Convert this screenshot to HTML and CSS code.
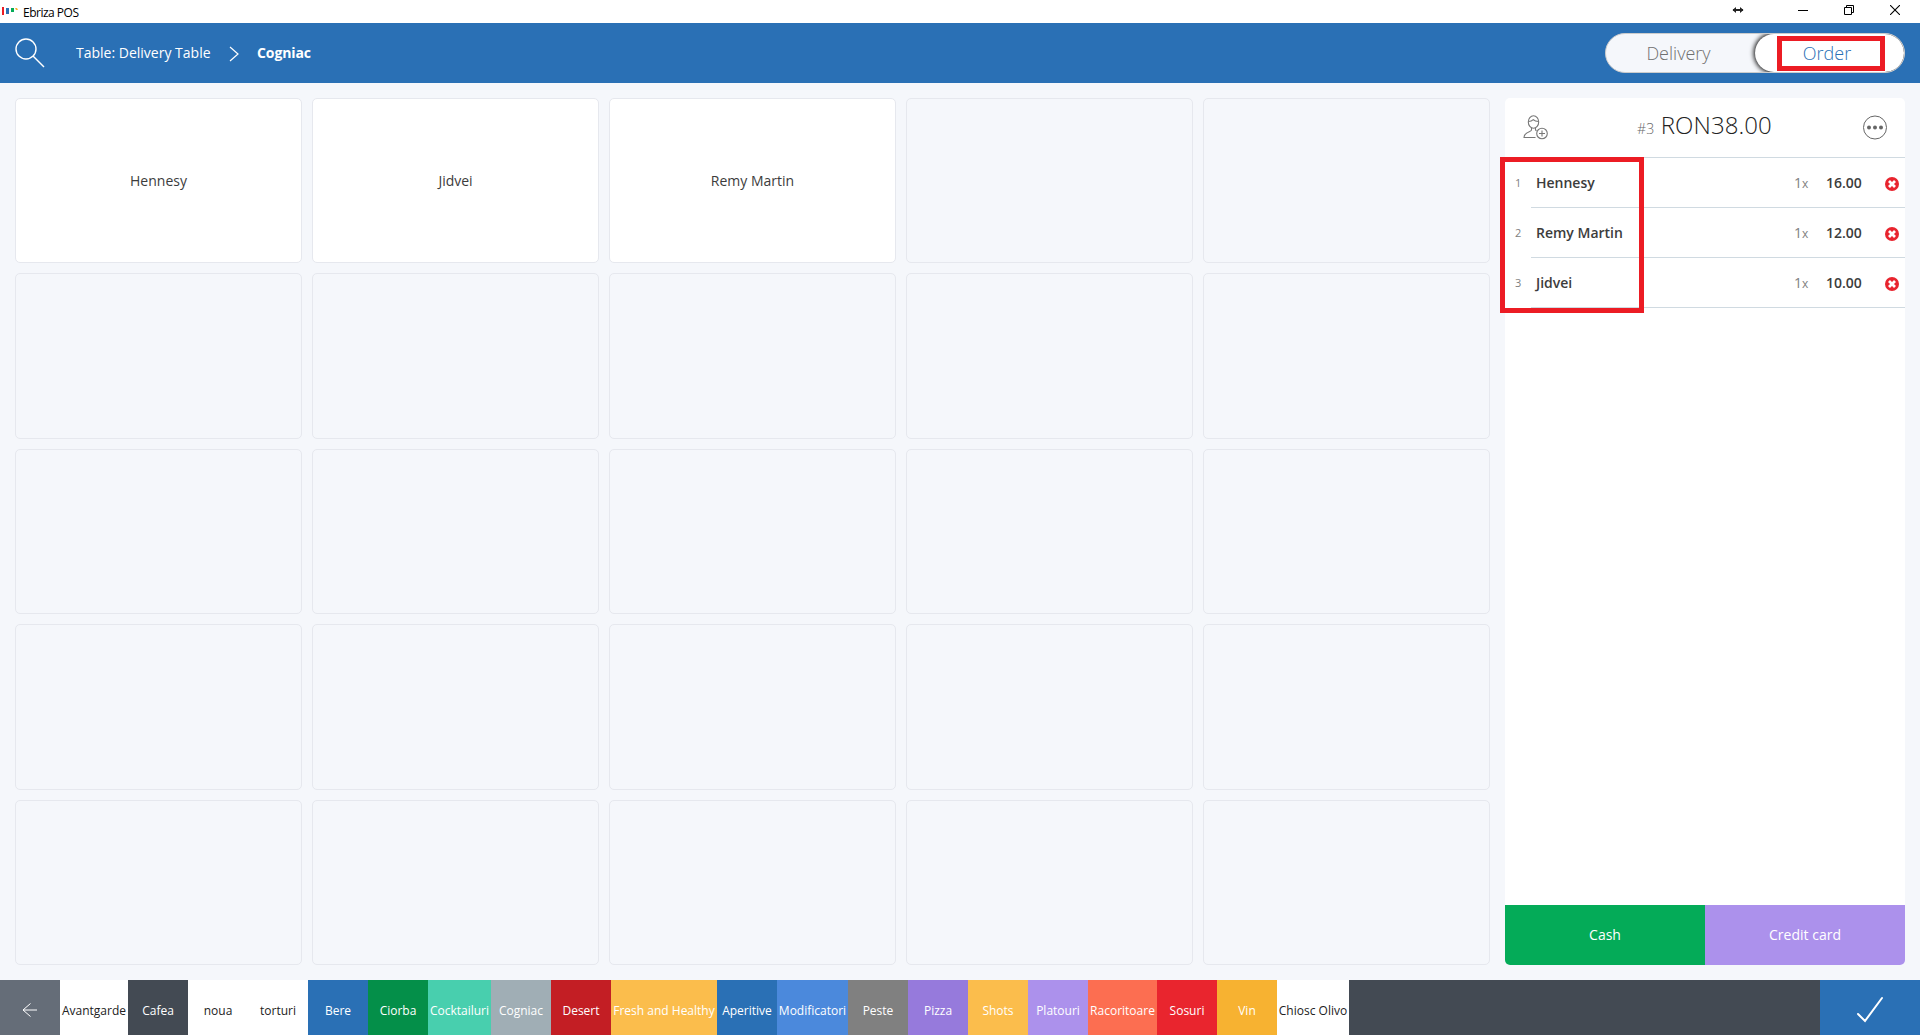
FILE: index.html
```
<!DOCTYPE html>
<html lang="en">
<head>
    <meta charset="UTF-8">
    <meta name="viewport" content="width=device-width, initial-scale=1.0">
    <title>Ebriza POS</title>
    <link rel="stylesheet" href="styles.css">
</head>
<body>
    <div class="titlebar">
      <svg class="logo" width="17" height="10" viewBox="0 0 17 10">
        <rect x="0" y="1" width="2" height="8" fill="#ec1c24"/>
        <rect x="4" y="2" width="3" height="6" fill="#2a70b5"/>
        <rect x="9" y="2" width="3" height="4" fill="#04ab58"/>
        <path d="M13 2h2l1 2h-2z" fill="#f7b231"/>
      </svg>
      <span class="app-name">Ebriza POS</span>
      <div class="window-buttons">
        <svg width="12" height="8" viewBox="0 0 12 8"><path d="M1 4h10" stroke="#222" stroke-width="2"/><path d="M0.5 4l3.5-3v6zM11.5 4l-3.5-3v6z" fill="#222"/></svg>
        <svg width="10" height="10" viewBox="0 0 10 10"><path d="M0 5.5h10" stroke="#000"/></svg>
        <svg width="10" height="10" viewBox="0 0 10 10"><path d="M0.5 2.5h7v7h-7zM2.5 2.5v-2h7v7h-2" stroke="#000" fill="none"/></svg>
        <svg width="10" height="10" viewBox="0 0 10 10"><path d="M0 0l10 10M10 0l-10 10" stroke="#000" stroke-width="1.1"/></svg>
      </div>
    </div>

    <div class="header">
      <svg class="search" width="30" height="30" viewBox="0 0 30 30"><circle cx="11" cy="11" r="10" /><path d="M18 18l11 11"/></svg>
      <span class="crumb">Table: Delivery Table</span>
      <svg class="chevron" width="10" height="16" viewBox="0 0 10 16"><path d="M1 1l8 7-8 7"/></svg>
      <span class="crumb current">Cogniac</span>
      <div class="switch">
        <div class="switch-item">Delivery</div>
        <div class="switch-item active">Order<div class="mark mark-order"></div></div>
      </div>
    </div>

    <div class="main">
      <div class="products">
        <div class="product">Hennesy</div>
        <div class="product">Jidvei</div>
        <div class="product">Remy Martin</div>
        <div class="product empty"></div>
        <div class="product empty"></div>
        <div class="product empty"></div>
        <div class="product empty"></div>
        <div class="product empty"></div>
        <div class="product empty"></div>
        <div class="product empty"></div>
        <div class="product empty"></div>
        <div class="product empty"></div>
        <div class="product empty"></div>
        <div class="product empty"></div>
        <div class="product empty"></div>
        <div class="product empty"></div>
        <div class="product empty"></div>
        <div class="product empty"></div>
        <div class="product empty"></div>
        <div class="product empty"></div>
        <div class="product empty"></div>
        <div class="product empty"></div>
        <div class="product empty"></div>
        <div class="product empty"></div>
        <div class="product empty"></div>
      </div>

      <div class="bill">
        <div class="bill-head">
          <svg class="client" width="26" height="26" viewBox="0 0 26 26">
            <ellipse cx="10.5" cy="7" rx="5.2" ry="6.3"/>
            <path d="M5.5 6.5c2 0 3.5-.5 4.8-1.8 1.2 1.300 3 1.800 5.200 1.800M8.500 12.800v2.200c0 2-7.300 1.500-7.500 7.500h11.500M12.500 12.800v2.200l1 .8"/>
            <circle cx="19" cy="18.500" r="5.300"/>
            <path d="M19 15.500v6M16 18.500h6"/>
          </svg>
          <div class="total"><span class="bill-no">#3</span> RON38.00</div>
          <svg class="more" width="26" height="26" viewBox="0 0 26 26">
            <circle class="ring" cx="13" cy="12.500" r="11.500"/>
            <circle cx="7" cy="12.500" r="2"/><circle cx="13" cy="12.500" r="2"/><circle cx="19" cy="12.500" r="2"/>
          </svg>
        </div>
        <div class="items">
          <div class="item">
            <span class="no">1</span>
            <div class="line"><span class="name">Hennesy</span><span class="qty">1<small>x</small></span><span class="price">16.00</span>
              <svg class="remove" width="14" height="14" viewBox="0 0 14 14"><circle cx="7" cy="7" r="7"/><path d="M4 4l6 6M10 4l-6 6"/></svg></div>
          </div>
          <div class="item">
            <span class="no">2</span>
            <div class="line"><span class="name">Remy Martin</span><span class="qty">1<small>x</small></span><span class="price">12.00</span>
              <svg class="remove" width="14" height="14" viewBox="0 0 14 14"><circle cx="7" cy="7" r="7"/><path d="M4 4l6 6M10 4l-6 6"/></svg></div>
          </div>
          <div class="item">
            <span class="no">3</span>
            <div class="line"><span class="name">Jidvei</span><span class="qty">1<small>x</small></span><span class="price">10.00</span>
              <svg class="remove" width="14" height="14" viewBox="0 0 14 14"><circle cx="7" cy="7" r="7"/><path d="M4 4l6 6M10 4l-6 6"/></svg></div>
          </div>
          <div class="mark mark-items"></div>
        </div>
        <div class="pay">
          <div class="cash">Cash</div>
          <div class="card">Credit card</div>
        </div>
      </div>
    </div>

    <div class="footer">
      <div class="tab back"><svg width="16" height="14" viewBox="0 0 16 14"><path d="M15 7h-14M8.500 0.500l-7.500 6.500 7.500 6.500"/></svg></div>
      <div class="tab white w68">Avantgarde</div>
      <div class="tab dark">Cafea</div>
      <div class="tab white">noua</div>
      <div class="tab white">torturi</div>
      <div class="tab blue">Bere</div>
      <div class="tab green">Ciorba</div>
      <div class="tab mint w63">Cocktailuri</div>
      <div class="tab grey">Cogniac</div>
      <div class="tab crimson">Desert</div>
      <div class="tab yellow w106">Fresh and Healthy</div>
      <div class="tab blue">Aperitive</div>
      <div class="tab sky w71">Modificatori</div>
      <div class="tab stone">Peste</div>
      <div class="tab violet">Pizza</div>
      <div class="tab yellow">Shots</div>
      <div class="tab lilac">Platouri</div>
      <div class="tab coral w69">Racoritoare</div>
      <div class="tab red">Sosuri</div>
      <div class="tab orange">Vin</div>
      <div class="tab white w72">Chiosc Olivo</div>
      <div class="confirm"><svg width="28" height="27" viewBox="0 0 28 27"><path d="M2 18l7 7L26 2"/></svg></div>
    </div>
</body>
</html>
```
FILE: styles.css
```
* {
  box-sizing: border-box;
}

body {
  margin: 0;
  height: 1035px;
  display: flex;
  flex-direction: column;
  overflow: hidden;
  background: #f5f7fb;
  color: #3c3c3c;
  font-family: "Open Sans", "Noto Sans", sans-serif;
  font-size: 14px;
}

svg {
  display: block;
  flex: none;
}

/* window title */
.titlebar {
  height: 23px;
  display: flex;
  align-items: center;
  padding: 0 20px 0 2px;
  background: #fff;
  color: #000;
}

.logo {
  margin-top: -1px;
}

.app-name {
  margin-left: 4px;
  margin-top: 1px;
  font-size: 12px;
  letter-spacing: -0.5px;
}

.window-buttons {
  display: flex;
  align-items: center;
  margin-left: auto;
  margin-top: -3px;
}

.window-buttons svg + svg {
  margin-left: 36px;
}

.window-buttons svg:nth-child(2) {
  margin-left: 54px;
}

/* header */
.header {
  height: 60px;
  display: flex;
  align-items: center;
  padding: 0 15px;
  background: #2a70b5;
  color: #fff;
}

.search {
  margin-right: 31px;
}

.search,
.chevron {
  fill: none;
  stroke: #fff;
  stroke-width: 1.4;
}

.chevron {
  margin: 2px 18px 0 18px;
  stroke-width: 1.2;
}

.crumb {
  width: 135px;
  margin-top: -1px;
  white-space: nowrap;
}

.current {
  font-weight: 700;
  letter-spacing: -0.1px;
}

.switch {
  display: flex;
  width: 300px;
  height: 40px;
  margin-left: auto;
  border: 1px solid #ccc;
  border-radius: 20px;
  background: #f5f7fb;
  overflow: hidden;
}

.switch-item {
  width: 149px;
  padding-right: 4px;
  line-height: 39px;
  text-align: center;
  font-size: 18px;
  font-weight: 300;
  color: #707070;
}

.switch-item.active {
  position: relative;
  width: 149px;
  padding-right: 5px;
  border-radius: 20px;
  background: #fff;
  color: #2a70b5;
  box-shadow: 0 0 5px 1px #000;
}

/* red highlight frames */
.mark {
  position: absolute;
  border: 5px solid #ec1c24;
}

.mark-order {
  left: 22px;
  top: 2px;
  width: 108px;
  height: 35px;
}

.mark-items {
  left: -5px;
  top: -1px;
  width: 144px;
  height: 156px;
}

/* content */
.main {
  height: 897px;
  display: flex;
  gap: 15px;
  padding: 15px;
}

.products {
  width: 1475px;
  display: grid;
  grid-template-columns: repeat(5, 1fr);
  grid-template-rows: repeat(5, 1fr);
  gap: 10px;
}

.product {
  display: flex;
  align-items: center;
  justify-content: center;
  border: 1px solid #e6e8ee;
  border-radius: 5px;
  background: #fff;
}

.empty {
  background: #f5f7fb;
}

.bill {
  width: 400px;
  display: flex;
  flex-direction: column;
  border-radius: 5px;
  background: #fff;
}

.bill-head {
  height: 60px;
  display: flex;
  align-items: center;
  justify-content: space-between;
  padding: 0 17px 0 18px;
  border-bottom: 1px solid #d0dae1;
}

.client {
  fill: none;
  stroke: #777;
  stroke-width: 1.1;
}

.total {
  margin-top: -6px;
  margin-left: -2px;
  font-size: 24px;
  font-weight: 300;
  letter-spacing: 0.1px;
  color: #222;
}

.bill-no {
  font-size: 14px;
  color: #666;
}

.more {
  fill: #666;
}

.more .ring {
  fill: none;
  stroke: #666;
}

.items {
  position: relative;
  flex: 1;
}

.item {
  height: 50px;
  display: flex;
}

.no {
  width: 26px;
  padding-left: 10px;
  line-height: 50px;
  font-size: 11px;
  color: #808080;
}

.line {
  flex: 1;
  display: flex;
  align-items: center;
  padding: 0 6px 0 5px;
  border-bottom: 1px solid #d0dae1;
}

.name,
.price {
  font-weight: 600;
}

.name {
  flex: 1;
}

.qty {
  width: 32px;
  color: #808080;
}

.qty small {
  font-size: 12px;
}

.price {
  width: 59px;
}

.remove {
  fill: #e8242e;
  margin-top: 2px;
}

.remove path {
  stroke: #fff;
  stroke-width: 2.8;
}

.pay {
  height: 60px;
  display: flex;
  border-radius: 0 0 5px 5px;
  overflow: hidden;
  color: #fff;
  line-height: 60px;
  text-align: center;
}

.cash,
.card {
  flex: 1;
}

.cash {
  background: #04ab58;
}

.card {
  background: #ac91ec;
}

/* category bar */
.footer {
  height: 55px;
  display: flex;
  background: #434a53;
}

.tab {
  width: 60px;
  line-height: 62px;
  text-align: center;
  white-space: nowrap;
  font-size: 12px;
  color: #fff;
}

.back {
  display: flex;
  align-items: center;
  justify-content: center;
  padding-top: 5px;
  background: #656d78;
}

.back svg,
.confirm svg {
  fill: none;
  stroke: #fff;
}

.confirm {
  display: flex;
  align-items: center;
  justify-content: center;
  width: 100px;
  padding-top: 4px;
  margin-left: auto;
  background: #2a70b5;
}

.confirm svg {
  stroke-width: 2;
  stroke-linecap: round;
}

.w63 { width: 63px; }
.w68 { width: 68px; }
.w69 { width: 69px; }
.w71 { width: 71px; }
.w72 { width: 72px; }
.w106 { width: 106px; }

.white { background: #fff; color: #222; }
.dark { background: #434a53; }
.blue { background: #2a70b5; }
.green { background: #048f49; }
.mint { background: #48cfae; }
.grey { background: #a0aeb5; }
.crimson { background: #c31e24; }
.yellow { background: #fbbd4c; }
.sky { background: #4b89dc; }
.stone { background: #808080; }
.violet { background: #967adc; }
.lilac { background: #ac91ec; }
.coral { background: #fc6e51; }
.red { background: #e9252e; }
.orange { background: #f7b231; }
```
